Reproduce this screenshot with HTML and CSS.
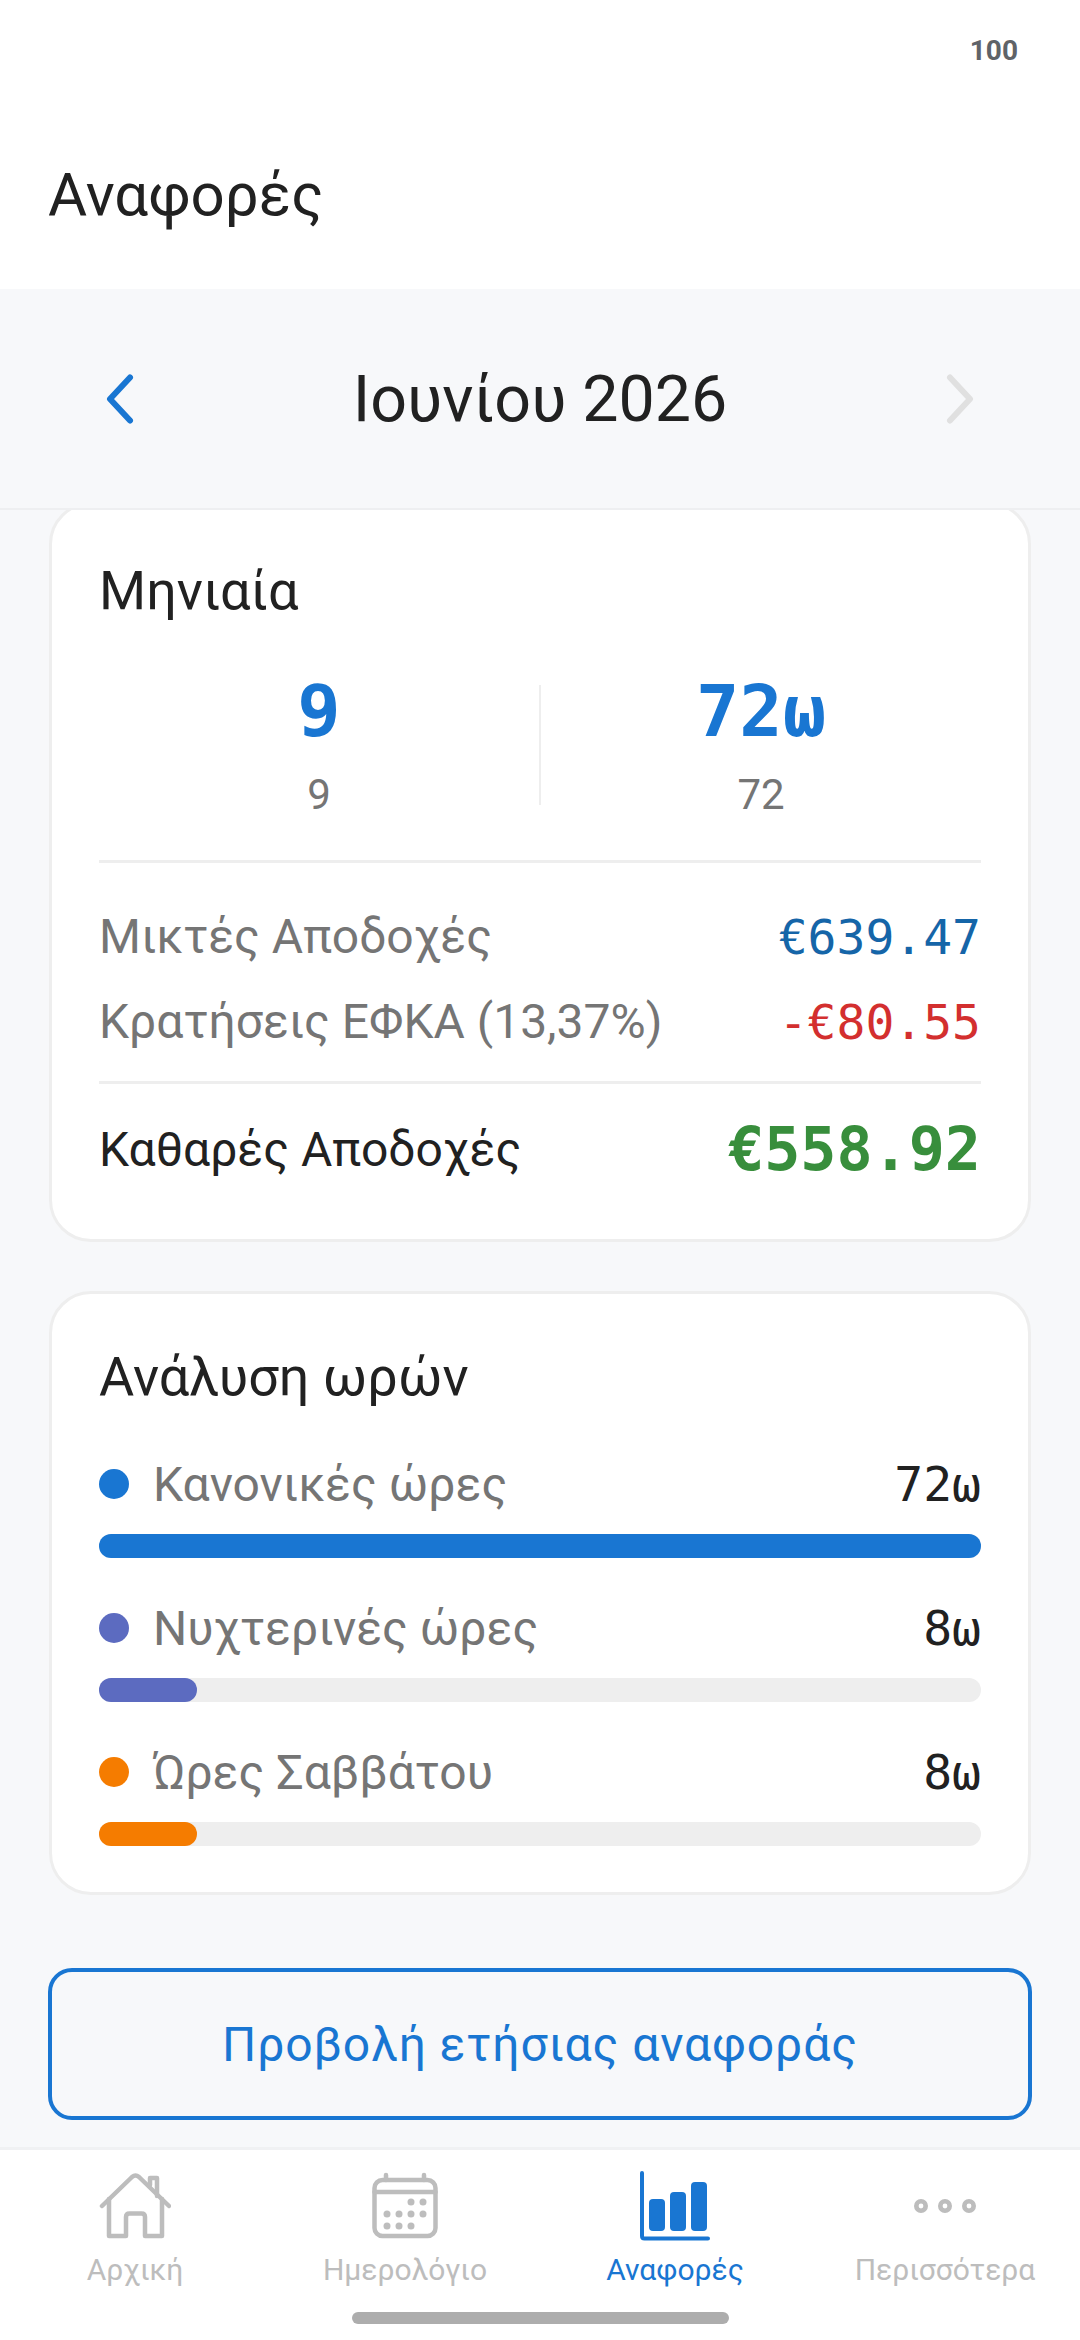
FILE: index.html
```html
<!DOCTYPE html>
<html lang="el">
<head>
    <meta charset="UTF-8">
    <meta name="viewport" content="width=device-width, initial-scale=1.0">
    <title>Αναφορές</title>
    <link rel="stylesheet" href="styles.css">
</head>
<body>
    <div class="app">
        <header class="top">
            <div class="status-bar">100</div>
            <h1>Αναφορές</h1>
        </header>

        <div class="month-nav">
            <svg class="chevron" viewBox="0 0 30 52"><path d="M25 4.5 L5 26 L25 47.5" fill="none" stroke="#1976d2" stroke-width="6" stroke-linecap="round" stroke-linejoin="round"/></svg>
            <span class="month">Ιουνίου 2026</span>
            <svg class="chevron" viewBox="0 0 30 52"><path d="M5 4.5 L25 26 L5 47.5" fill="none" stroke="#e0e0e0" stroke-width="6" stroke-linecap="round" stroke-linejoin="round"/></svg>
        </div>

        <main class="content">
            <section class="card card-month">
                <h2>Μηνιαία</h2>
                <div class="stats">
                    <div class="stat">
                        <div class="stat-value">9</div>
                        <div class="stat-label">9</div>
                    </div>
                    <div class="stat-sep"></div>
                    <div class="stat">
                        <div class="stat-value">72ω</div>
                        <div class="stat-label">72</div>
                    </div>
                </div>
                <div class="money">
                    <div class="money-row">
                        <span>Μικτές Αποδοχές</span>
                        <span class="amount blue">€639.47</span>
                    </div>
                    <div class="money-row">
                        <span>Κρατήσεις ΕΦΚΑ (13,37%)</span>
                        <span class="amount red">-€80.55</span>
                    </div>
                </div>
                <div class="net-row">
                    <span>Καθαρές Αποδοχές</span>
                    <span class="amount green">€558.92</span>
                </div>
            </section>

            <section class="card card-hours">
                <h2>Ανάλυση ωρών</h2>
                <div class="hour">
                    <div class="hour-head">
                        <span class="dot bg-blue"></span>
                        <span class="hour-name">Κανονικές ώρες</span>
                        <span class="hour-val">72ω</span>
                    </div>
                    <div class="track"><div class="fill bg-blue" style="width: 100%"></div></div>
                </div>
                <div class="hour">
                    <div class="hour-head">
                        <span class="dot bg-indigo"></span>
                        <span class="hour-name">Νυχτερινές ώρες</span>
                        <span class="hour-val">8ω</span>
                    </div>
                    <div class="track"><div class="fill bg-indigo" style="width: 11.1%"></div></div>
                </div>
                <div class="hour">
                    <div class="hour-head">
                        <span class="dot bg-orange"></span>
                        <span class="hour-name">Ώρες Σαββάτου</span>
                        <span class="hour-val">8ω</span>
                    </div>
                    <div class="track"><div class="fill bg-orange" style="width: 11.1%"></div></div>
                </div>
            </section>

            <button class="year-btn">Προβολή ετήσιας αναφοράς</button>
        </main>

        <nav class="tabs">
            <div class="tab">
                <svg class="tab-icon" viewBox="0 0 72 72" fill="none" stroke="#bdbdbd" stroke-width="4.5" stroke-linecap="round" stroke-linejoin="round">
                    <path d="M3 36 L33 7 Q36.5 4 40 7 L70 36"/>
                    <path d="M51 15 V8 H58 V26"/>
                    <path d="M10 29 V66 H27 V47 Q27 43.5 30.5 43.5 H42.5 Q46 43.5 46 47 V66 H63 V29"/>
                </svg>
                <span>Αρχική</span>
            </div>
            <div class="tab">
                <svg class="tab-icon" viewBox="0 0 72 72" fill="none" stroke="#bdbdbd" stroke-width="4.5" stroke-linecap="round" stroke-linejoin="round">
                    <rect x="5.5" y="10" width="61" height="56" rx="8"/>
                    <path d="M5.5 22 H66.5"/>
                    <path d="M17 5 V10 M55 5 V10"/>
                    <g fill="#bdbdbd" stroke="none">
                        <circle cx="42" cy="32" r="3.5"/><circle cx="54" cy="32" r="3.5"/>
                        <circle cx="18" cy="44" r="3.5"/><circle cx="30" cy="44" r="3.5"/><circle cx="42" cy="44" r="3.5"/><circle cx="54" cy="44" r="3.5"/>
                        <circle cx="18" cy="56" r="3.5"/><circle cx="30" cy="56" r="3.5"/><circle cx="42" cy="56" r="3.5"/>
                    </g>
                </svg>
                <span>Ημερολόγιο</span>
            </div>
            <div class="tab active">
                <svg class="tab-icon" viewBox="0 0 72 72">
                    <path d="M3 3 V66 Q3 68.500 5.500 68.500 H69" fill="none" stroke="#1976d2" stroke-width="4" stroke-linecap="round" stroke-linejoin="round"/>
                    <rect x="10" y="29" width="16" height="32" rx="4" fill="#1976d2"/>
                    <rect x="31" y="22" width="16" height="39" rx="4" fill="#1976d2"/>
                    <rect x="52" y="12" width="16" height="49" rx="4" fill="#1976d2"/>
                </svg>
                <span>Αναφορές</span>
            </div>
            <div class="tab">
                <svg class="tab-icon" viewBox="0 0 72 72" fill="none" stroke="#bdbdbd" stroke-width="4.600">
                    <circle cx="12" cy="36" r="4.700"/><circle cx="36" cy="36" r="4.700"/><circle cx="60" cy="36" r="4.700"/>
                </svg>
                <span>Περισσότερα</span>
            </div>
            <div class="home-bar"></div>
        </nav>
    </div>
</body>
</html>
```

FILE: styles.css
```css
* {
    box-sizing: border-box;
}
html, body {
    margin: 0;
    padding: 0;
}
body {
    font-family: Roboto, "Noto Sans", sans-serif;
    background: #f7f8fa;
    color: #212121;
}
.app {
    width: 1080px;
    height: 2340px;
    display: flex;
    flex-direction: column;
    overflow: hidden;
}
.top {
    height: 289px;
    background: #fff;
    padding: 35px 62px 0 48px;
    flex-shrink: 0;
}
.status-bar {
    text-align: right;
    font-size: 28px;
    font-weight: 700;
    line-height: 32px;
    color: #5f6368;
}
h1 {
    margin: 92px 0 0;
    font-size: 60px;
    font-weight: 400;
    line-height: 72px;
}
.month-nav {
    height: 221px;
    flex-shrink: 0;
    display: flex;
    align-items: center;
    justify-content: space-between;
    padding: 0 105px;
    border-bottom: 2px solid #eeeff1;
}
.chevron {
    width: 30px;
    height: 52px;
}
.month {
    font-size: 64.5px;
    line-height: 80px;
}
.content {
    flex: 1;
    overflow: hidden;
    padding: 0 48px;
}
.card {
    background: #fff;
    border: 3px solid #eeeeee;
    border-radius: 42px;
    padding: 0 47px;
}
h2 {
    margin: 0;
    font-size: 54px;
    font-weight: 400;
    line-height: 64px;
}
.card-month {
    margin: -8px 1px 0;
    height: 740px;
    padding-top: 54px;
}
.stats {
    display: flex;
    align-items: center;
    margin-top: 46px;
    padding-bottom: 40px;
    border-bottom: 3px solid #eeeeee;
}
.stat {
    flex: 1;
    text-align: center;
}
.stat-sep {
    width: 2px;
    height: 120px;
    background: #eeeeee;
}
.stat-value {
    font-family: "DejaVu Sans Mono", monospace;
    font-size: 72px;
    font-weight: 700;
    line-height: 84px;
    color: #1976d2;
}
.stat-label {
    font-size: 42px;
    line-height: 50px;
    margin-top: 17px;
    color: #757575;
}
.money {
    padding: 31px 0 17px;
    border-bottom: 3px solid #eeeeee;
}
.money-row, .net-row {
    display: flex;
    justify-content: space-between;
    align-items: center;
    height: 85px;
    font-size: 48px;
    color: #757575;
}
.net-row {
    height: 130px;
    color: #212121;
}
.amount {
    font-family: "DejaVu Sans Mono", monospace;
    font-size: 48px;
}
.blue {
    color: #1565a8;
}
.red {
    color: #d32f2f;
}
.green {
    font-size: 60px;
    font-weight: 700;
    color: #388e3c;
}
.card-hours {
    margin: 49px 1px 0;
    height: 604px;
    padding-top: 51px;
}
.hour {
    margin-top: 39px;
}
.hour + .hour {
    margin-top: 34px;
}
.hour-head {
    display: flex;
    align-items: center;
    gap: 24px;
    height: 72px;
    font-size: 48px;
}
.dot {
    width: 30px;
    height: 30px;
    border-radius: 50%;
}
.hour-name {
    flex: 1;
    color: #757575;
}
.hour-val {
    font-family: "DejaVu Sans Mono", monospace;
}
.track {
    height: 24px;
    margin-top: 14px;
    border-radius: 12px;
    background: #eeeeee;
}
.fill {
    height: 100%;
    border-radius: 12px;
}
.bg-blue {
    background: #1976d2;
}
.bg-indigo {
    background: #5c6bc0;
}
.bg-orange {
    background: #f57c00;
}
.year-btn {
    display: block;
    width: 100%;
    height: 152px;
    margin-top: 73px;
    background: none;
    border: 4px solid #1976d2;
    border-radius: 24px;
    font-family: inherit;
    font-size: 48px;
    letter-spacing: 0.9px;
    color: #1976d2;
}
.tabs {
    position: relative;
    height: 193px;
    flex-shrink: 0;
    display: flex;
    background: #fff;
    border-top: 3px solid #f0f1f3;
    padding-top: 20px;
}
.tab {
    flex: 1;
    display: flex;
    flex-direction: column;
    align-items: center;
    font-size: 30px;
    color: #bdbdbd;
}
.tab-icon {
    width: 72px;
    height: 72px;
    margin-bottom: 10px;
}
.tab.active {
    color: #1976d2;
}
.home-bar {
    position: absolute;
    left: 352px;
    bottom: 16px;
    width: 377px;
    height: 12px;
    border-radius: 6px;
    background: #adadad;
}
```
